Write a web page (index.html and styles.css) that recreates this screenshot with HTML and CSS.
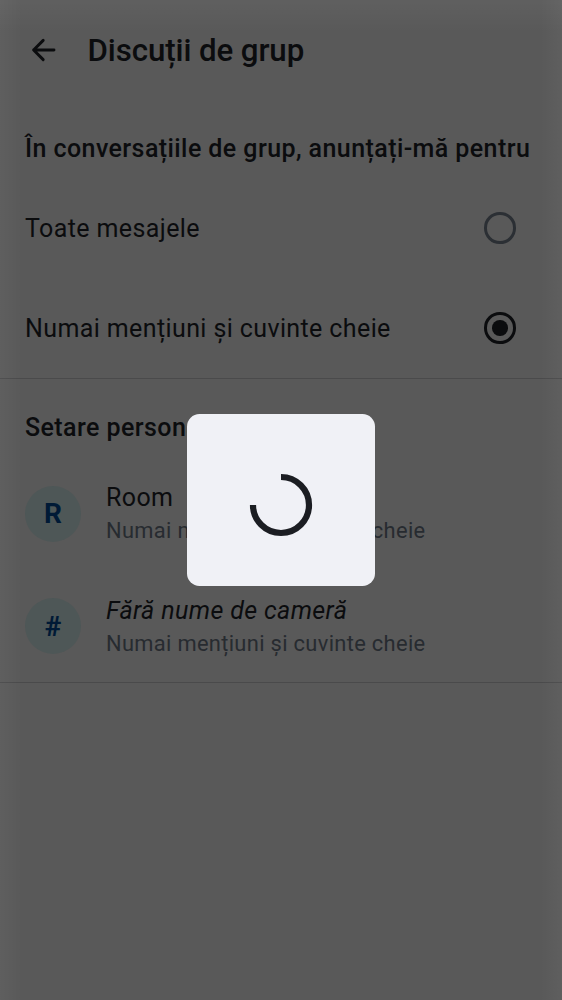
FILE: index.html
```html
<!DOCTYPE html>
<html lang="ro">
<head>
<meta charset="utf-8">
<title>Discuții de grup</title>
<link rel="stylesheet" href="styles.css">
</head>
<body>
<main class="screen">
  <header class="app-bar">
    <svg class="back" viewBox="0 0 38 38" fill="none" stroke="currentColor" stroke-width="2.9" stroke-linecap="round" stroke-linejoin="round"><path d="M29 19H8.6M18.2 9.4L8.6 19L18.2 28.6"/></svg>
    <h1 class="title">Discuții de grup</h1>
  </header>
  <section class="options">
    <h2 class="heading">În conversațiile de grup, anunțați-mă pentru</h2>
    <div class="option"><span>Toate mesajele</span><i class="radio"></i></div>
    <div class="option"><span>Numai mențiuni și cuvinte cheie</span><i class="radio selected"></i></div>
  </section>
  <section class="custom">
    <h2 class="heading">Setare personalizată</h2>
    <div class="room">
      <span class="avatar">R</span>
      <div class="details"><span class="name">Room</span><span class="mode">Numai mențiuni și cuvinte cheie</span></div>
    </div>
    <div class="room">
      <span class="avatar">#</span>
      <div class="details"><span class="name unnamed">Fără nume de cameră</span><span class="mode">Numai mențiuni și cuvinte cheie</span></div>
    </div>
  </section>
</main>
<div class="overlay">
  <div class="dialog">
    <svg class="spinner" viewBox="0 0 64 64" fill="none" stroke="#1b1d22" stroke-width="6.2"><path d="M32 4A28 28 0 1 1 4 32"/></svg>
  </div>
</div>
</body>
</html>
```
FILE: styles.css
```css
* { box-sizing: border-box; }
body {
  margin: 0;
  background: #595959;
  color: #0b0c0e;
  font-family: Roboto, sans-serif;
  font-size: 25px;
  overflow: hidden;
}
.screen { height: 1000px; }
.app-bar { display: flex; align-items: center; height: 100px; padding: 0 25px; gap: 24.5px; }
.back { width: 38px; height: 38px; }
.title { margin: 0; padding-top: 1px; font-size: 31.25px; font-weight: 500; line-height: 44px; letter-spacing: -0.09px; }
.heading { margin: 0; font-size: 25px; font-weight: 500; letter-spacing: 0.42px; line-height: 37px; white-space: nowrap; }
.options { height: 279px; padding-top: 30px; border-bottom: 1px solid #4a4a4b; }
.options .heading { padding: 0 25px; height: 48px; }
.option { display: flex; align-items: center; justify-content: space-between; height: 100px; padding: 0 46.5px 0 25px; letter-spacing: 0.39px; }
.radio { display: grid; place-items: center; width: 31.5px; height: 31.5px; border: 3px solid #2b2f34; border-radius: 50%; }
.radio.selected { border-color: #0b0c0e; }
.radio.selected::after { content: ""; width: 15.6px; height: 15.6px; border-radius: 50%; background: #0b0c0e; }
.custom { height: 304px; padding-top: 30px; border-bottom: 1px solid #4a4a4b; }
.custom .heading { height: 48.5px; padding: 0 25px; }
.room { display: flex; align-items: center; height: 112.5px; padding: 0 25px; gap: 25px; }
.avatar { display: grid; place-items: center; width: 56px; height: 56px; border-radius: 50%; background: #4e5757; color: #001a36; font-size: 28px; font-weight: 700; }
.details { display: flex; flex-direction: column; padding-bottom: 3px; }
.name { line-height: 37px; letter-spacing: 0.39px; }
.unnamed { font-style: italic; }
.mode { color: #272b30; font-size: 21.875px; line-height: 29px; letter-spacing: 0.33px; }
.overlay {
  position: absolute;
  inset: 0;
  display: grid;
  place-items: center;
  background:
    linear-gradient(to right, #ffffff09, #ffffff00 22px),
    linear-gradient(to left, #ffffff09, #ffffff00 22px),
    linear-gradient(to bottom, #ffffff0a, #ffffff00 32px);
}
.dialog { display: grid; place-items: center; width: 188px; height: 172px; border-radius: 12.5px; background: #f0f1f6; padding-top: 9px; }
.spinner { width: 64px; height: 64px; }
```
